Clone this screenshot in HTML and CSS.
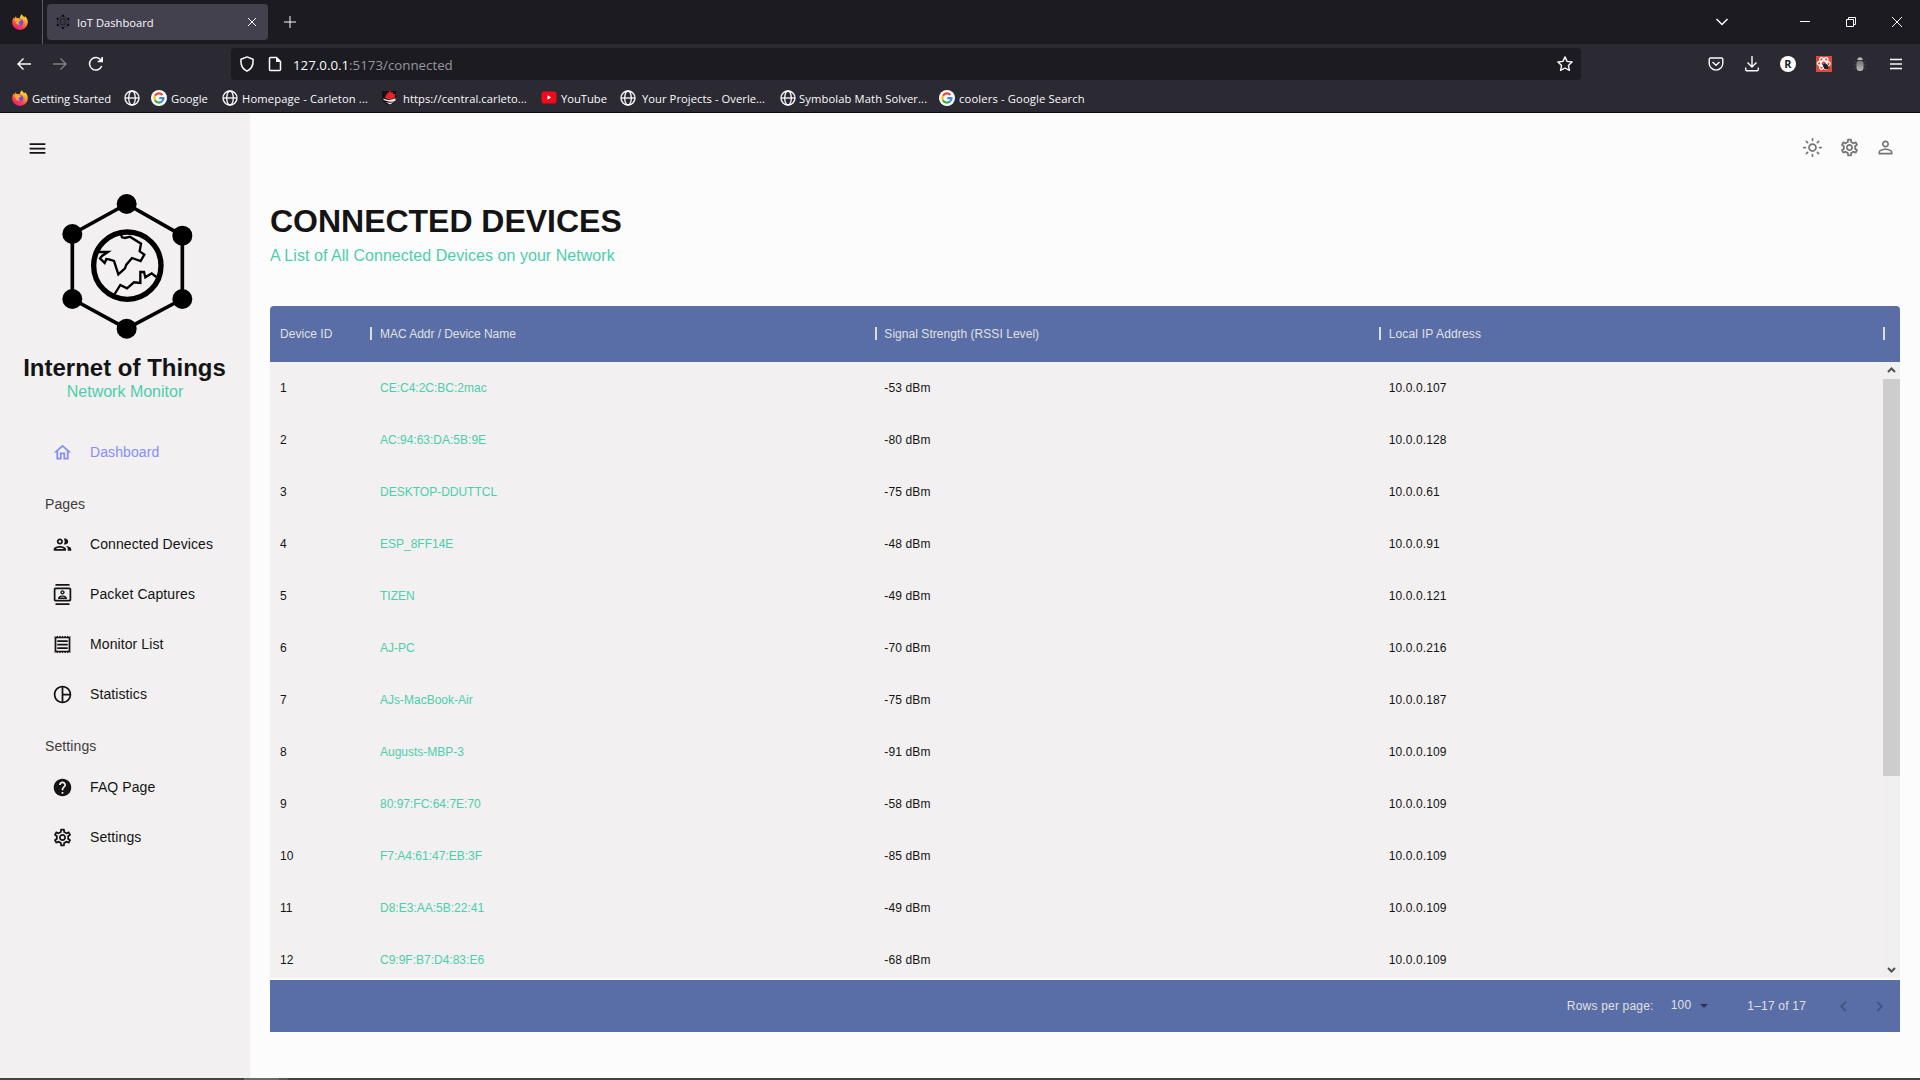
FILE: index.html
```html
<!DOCTYPE html>
<html lang="en">
<head>
<meta charset="utf-8">
<title>IoT Dashboard</title>
<link rel="stylesheet" href="styles.css">
</head>
<body>
<svg class="defs" width="0" height="0" aria-hidden="true">
  <defs>
    <linearGradient id="fire" x1="0.8" y1="0" x2="0.3" y2="1">
      <stop offset="0" stop-color="#fff04a"/><stop offset="0.4" stop-color="#ff9a1f"/><stop offset="0.75" stop-color="#ff3b4e"/><stop offset="1" stop-color="#e3157f"/>
    </linearGradient>
    <linearGradient id="bugfill" x1="0" y1="0" x2="0" y2="1"><stop offset="0" stop-color="#6f6f72"/><stop offset="1" stop-color="#bdbdbd"/></linearGradient>
    <symbol id="firefox" viewBox="0 0 16 16">
      <path fill="url(#fire)" d="M10 .2c.4 1.300 1.500 2 2.600 3.200.3-.2.2-.9.1-1.300C14.800 3.700 16 6 15.800 8.600 15.500 12.800 12 16 8 16 3.600 16 .2 12.500.2 8.300c0-2 .8-3.800 1.700-5 .1.6.2 1 .5 1.300.3-.9.9-1.800 1.600-2.300 0 .8.300 1.300.7 1.800 1-.3 2.200-.1 3 .3C8 2.800 8.700 1.100 10 .2z"/>
      <circle cx="8" cy="8.600" r="3.300" fill="#7a45e8"/>
      <path fill="#ffab2a" d="M2.500 5.500c1.600-1.400 3.800-1.300 5.500.2 1 .1 1.300.6.6 1.200-.8.600-1.800.3-2 1.500-.1 1 1 1.700 2.100 1.500-1.500 1.300-4 .8-4.700-1C3.500 7.700 3 6.500 2.500 5.500z"/>
    </symbol>
    <symbol id="globe" viewBox="0 0 16 16">
      <g fill="none" stroke="#fbfbfe" stroke-width="1.300"><circle cx="8" cy="8" r="7"/><ellipse cx="8" cy="8" rx="3.300" ry="7"/><path d="M1 8h14"/></g>
    </symbol>
    <symbol id="google" viewBox="0 0 16 16">
      <circle cx="8" cy="8" r="8" fill="#fff"/>
      <g fill="none" stroke-width="2.200"><path stroke="#ea4335" d="M4 5.800A4.500 4.500 0 0 1 11.300 4.900"/><path stroke="#fbbc05" d="M4 5.800a4.500 4.500 0 0 0 0 4.400"/><path stroke="#34a853" d="M4 10.200a4.500 4.500 0 0 0 6.900 1.300"/><path stroke="#4285f4" d="M10.900 11.500A4.400 4.400 0 0 0 12.500 8.100H8.200"/></g>
    </symbol>
    <symbol id="iot" viewBox="0 0 495 495">
      <path d="M245 57 412 152 412 342 245 431 82 342 82 147z" fill="none" stroke="#000" stroke-width="11"/>
      <g fill="#000"><circle cx="245" cy="57" r="30"/><circle cx="412" cy="152" r="30"/><circle cx="412" cy="342" r="30"/><circle cx="245" cy="431" r="30"/><circle cx="82" cy="342" r="30"/><circle cx="82" cy="147" r="30"/></g>
      <circle cx="247" cy="242" r="101" fill="none" stroke="#000" stroke-width="16"/>
      <path d="M228 148 231 157 240 159 255 155 288 176 284 199 298 209 287 228 261 219 244 239 240 250 220 268 207 228 192 223 184 222 179 234 165 220 171 213 189 201 160 201M209 327 226 300 246 310 267 292 286 294 286 261 297 261 301 277 320 265 334 276" fill="none" stroke="#000" stroke-width="7"/>
    </symbol>
    <symbol id="gear" viewBox="0 0 24 24"><path d="M19.430 12.980c.04-.32.070-.64.070-.98s-.030-.66-.070-.98l2.110-1.650c.19-.15.240-.42.120-.64l-2-3.460c-.09-.16-.26-.25-.44-.25-.06 0-.12.010-.17.030l-2.490 1c-.52-.4-1.080-.73-1.690-.98l-.38-2.650C14.460 2.180 14.250 2 14 2h-4c-.25 0-.46.180-.49.420l-.38 2.650c-.61.250-1.170.590-1.690.98l-2.490-1c-.06-.020-.12-.030-.18-.030-.17 0-.34.090-.43.250l-2 3.460c-.13.220-.07.490.12.640l2.110 1.650c-.04.320-.07.650-.07.980s.030.660.070.980l-2.110 1.650c-.19.150-.24.420-.12.640l2 3.460c.09.160.26.250.44.250.06 0 .12-.010.17-.030l2.490-1c.52.400 1.080.730 1.690.980l.38 2.650c.03.240.24.420.49.420h4c.25 0 .46-.18.490-.42l.38-2.650c.61-.25 1.170-.59 1.690-.98l2.490 1c.06.020.12.030.18.030.17 0 .34-.09.430-.25l2-3.460c.12-.22.070-.49-.12-.64l-2.110-1.650zm-1.980-1.710c.04.310.050.520.050.730 0 .21-.020.430-.05.730l-.14 1.130.89.700 1.080.840-.7 1.210-1.270-.51-1.040-.42-.9.680c-.43.320-.84.560-1.250.730l-1.060.430-.16 1.130-.2 1.350h-1.400l-.19-1.350-.16-1.130-1.060-.43c-.43-.18-.83-.41-1.230-.71l-.91-.7-1.060.430-1.270.510-.7-1.210 1.080-.84.890-.7-.14-1.130c-.03-.31-.05-.54-.05-.74s.020-.43.050-.73l.14-1.130-.89-.7-1.080-.84.700-1.210 1.270.510 1.040.420.900-.68c.43-.32.840-.56 1.250-.73l1.060-.43.160-1.130.2-1.350h1.390l.19 1.350.16 1.130 1.060.43c.43.180.83.410 1.230.71l.91.700 1.060-.43 1.270-.51.700 1.210-1.070.850-.89.700.14 1.130zM12 8c-2.210 0-4 1.790-4 4s1.790 4 4 4 4-1.790 4-4-1.790-4-4-4zm0 6c-1.100 0-2-.9-2-2s.9-2 2-2 2 .9 2 2-.9 2-2 2z"/></symbol>
  </defs>
</svg>

<header class="browser">
  <div class="tabbar">
    <div class="pinned"><svg width="16" height="16"><use href="#firefox"/></svg></div>
    <div class="tab">
      <svg class="favicon" width="16" height="16"><use href="#iot"/></svg>
      <span class="tab-title">IoT Dashboard</span>
      <svg class="line" width="10" height="10" viewBox="0 0 10 10"><path d="M1 1l8 8M9 1L1 9"/></svg>
    </div>
    <svg class="line newtab" width="12" height="12" viewBox="0 0 12 12"><path d="M6 0v12M0 6h12"/></svg>
    <div class="window-controls">
      <svg class="line" width="14" height="8" viewBox="0 0 14 8"><path stroke-width="1.500" d="M1.500 1l5.500 5.500L12.500 1"/></svg>
      <svg class="line" width="10" height="10" viewBox="0 0 10 10"><path d="M0 4.500h10"/></svg>
      <svg class="line" width="10" height="10" viewBox="0 0 10 10"><path d="M.5 2.500h7v7h-7zM2.500 2.500v-2h7v7h-2"/></svg>
      <svg class="line" width="10" height="10" viewBox="0 0 10 10"><path d="M0 0l10 10M10 0L0 10"/></svg>
    </div>
  </div>
  <div class="navbar">
    <div class="nav-buttons">
      <svg class="line" width="16" height="16" viewBox="0 0 16 16"><path stroke-width="1.400" d="M15 8H2M7.500 2.500L2 8l5.500 5.500"/></svg>
      <svg class="line dim" width="16" height="16" viewBox="0 0 16 16"><path stroke-width="1.400" d="M1 8h13M8.500 2.500L14 8l-5.500 5.500"/></svg>
      <svg class="line" width="16" height="16" viewBox="0 0 16 16"><path stroke-width="1.500" d="M13.700 10A6.300 6.300 0 1 1 13 4.200M14.200 1v4.500H9.700"/><path fill="#fbfbfe" stroke="none" d="M14.900 1v5H9.800z"/></svg>
    </div>
    <div class="urlbar">
      <svg class="line" width="16" height="16" viewBox="0 0 16 16"><path stroke-width="1.500" d="M8 .9l6 2.300c.6 5.600-1.500 9.700-6 12-4.500-2.300-6.600-6.400-6-12z" stroke-linejoin="round"/></svg>
      <svg class="line page" width="14" height="16" viewBox="0 0 14 16"><path stroke-width="1.500" d="M8.500 1.500h-6a1 1 0 0 0-1 1v11a1 1 0 0 0 1 1h9a1 1 0 0 0 1-1v-8z"/><path fill="#fbfbfe" stroke="none" d="M8 1l5 5H8z"/></svg>
      <span class="url"><b>127.0.0.1</b>:5173/connected</span>
      <svg class="line star" width="16" height="16" viewBox="0 0 16 16"><path stroke-width="1.400" stroke-linejoin="round" d="M8 .9l2.100 4.500 5 .6-3.700 3.400 1 5L8 12l-4.400 2.400 1-5L.9 6l5-.6z"/></svg>
    </div>
    <div class="tools">
      <svg class="line" width="16" height="16" viewBox="0 0 16 16"><path stroke-width="1.400" d="M2.500 2h11a1.300 1.300 0 0 1 1.300 1.300v4A6.800 6.800 0 0 1 1.200 7.300v-4A1.300 1.300 0 0 1 2.500 2zM4.500 6L8 9.300 11.500 6"/></svg>
      <svg class="line" width="16" height="16" viewBox="0 0 16 16"><path stroke-width="1.400" d="M8 0v10.500M3.500 6.500L8 11l4.500-4.500M1.700 11.500v2a1.300 1.300 0 0 0 1.300 1.300h10a1.300 1.300 0 0 0 1.300-1.300v-2"/></svg>
      <span class="badge-r">R</span>
      <svg width="16" height="16" viewBox="0 0 16 16"><path fill="#dc4a3d" d="M0 0h16v16H0z"/><g fill="none" stroke="#fff" stroke-width="1.200"><ellipse cx="7.800" cy="7.500" rx="6.500" ry="2.700"/><ellipse cx="7.800" cy="7.500" rx="6.500" ry="2.700" transform="rotate(60 7.800 7.500)"/><ellipse cx="7.800" cy="7.500" rx="6.500" ry="2.700" transform="rotate(120 7.800 7.500)"/></g><ellipse cx="9.800" cy="10.500" rx="2.300" ry="3.200" fill="#222" transform="rotate(-40 9.800 10.500)"/><path stroke="#222" stroke-width=".7" d="M6.500 8.500l7 4M8 13l5-5"/></svg>
      <svg width="16" height="16" viewBox="0 0 16 16"><path stroke="#45444c" d="M2 5l3 2M14 5l-3 2M1 9h14M2 13l3-2M14 13l-3-2"/><rect x="4.500" y="4.500" width="7" height="10.500" rx="3.500" fill="url(#bugfill)"/><path fill="#b5b5b5" d="M5.300 4a2.700 2.700 0 0 1 5.400 0z"/></svg>
      <svg class="line" width="12" height="12" viewBox="0 0 12 12"><path stroke-width="1.300" d="M0 1.500h12M0 6h12M0 10.500h12"/></svg>
    </div>
  </div>
  <nav class="bookmarks">
    <div class="bm"><svg width="16" height="16"><use href="#firefox"/></svg><span>Getting Started</span></div>
    <div class="bm"><svg width="16" height="16"><use href="#globe"/></svg></div>
    <div class="bm"><svg width="16" height="16"><use href="#google"/></svg><span>Google</span></div>
    <div class="bm long"><svg width="16" height="16"><use href="#globe"/></svg><span>Homepage - Carleton ...</span></div>
    <div class="bm central"><svg width="16" height="16" viewBox="0 0 16 16"><path fill="#111" d="M0 1h14v8q-1 5-6.500 6Q1 13 0 9z"/><path fill="#e8212e" d="M8 0l1 2.500L11 2l-.2 2L13.500 4l-1 2.200 1 1.300L9.500 9.200H6L2.500 7.500 4 6 3.500 4.300l2 .4L5.200 2.500l1.600.3z"/><path fill="#eee" d="M1.500 8.500q5 3 12-.3v2.500q-2 1.500-5.500 1t-6.500-1.700zM3.500 12q4.500 1.500 8.500 0L8 14.500z"/></svg><span>https://central.carleto...</span></div>
    <div class="bm"><svg width="16" height="16" viewBox="0 0 16 16"><rect x=".5" y="1.500" width="15" height="12" rx="2.500" fill="#f00a1c"/><path fill="#fff" d="M6.500 5.200v4.600l3.700-2.300z"/></svg><span>YouTube</span></div>
    <div class="bm wide"><svg width="16" height="16"><use href="#globe"/></svg><span>Your Projects - Overle...</span></div>
    <div class="bm tight"><svg width="16" height="16"><use href="#globe"/></svg><span>Symbolab Math Solver...</span></div>
    <div class="bm long"><svg width="16" height="16"><use href="#google"/></svg><span>coolers - Google Search</span></div>
  </nav>
</header>

<div class="app">
  <aside class="sidebar">
    <svg class="burger" width="21" height="21" viewBox="0 0 24 24"><path d="M3 18h18v-2H3v2zm0-5h18v-2H3v2zm0-7v2h18V6H3z"/></svg>
    <svg class="logo" width="165" height="165"><use href="#iot"/></svg>
    <h2 class="brand">Internet of Things</h2>
    <p class="brand-sub">Network Monitor</p>
    <ul class="menu">
      <li class="active"><svg viewBox="0 0 24 24"><path d="M12 5.690l5 4.500V18h-2v-6H9v6H7v-7.810l5-4.500M12 3L2 12h3v8h6v-6h2v6h6v-8h3L12 3z"/></svg>Dashboard</li>
      <li class="heading">Pages</li>
      <li><svg viewBox="0 0 24 24"><path d="M9 13.750c-2.340 0-7 1.170-7 3.500V19h14v-1.750c0-2.330-4.660-3.500-7-3.500zM4.340 17c.84-.58 2.870-1.250 4.660-1.250s3.820.670 4.660 1.250H4.340zM9 12c1.930 0 3.500-1.570 3.500-3.500S10.930 5 9 5 5.500 6.570 5.500 8.500 7.070 12 9 12zm0-5c.83 0 1.500.67 1.500 1.500S9.830 10 9 10s-1.500-.67-1.500-1.500S8.170 7 9 7zm7.040 6.810c1.160.84 1.960 1.960 1.960 3.440V19h4v-1.750c0-2.020-3.500-3.170-5.960-3.440zM15 12c1.930 0 3.500-1.570 3.500-3.500S16.930 5 15 5c-.54 0-1.040.13-1.500.35.63.89 1 1.980 1 3.150s-.37 2.260-1 3.150c.46.22.96.35 1.500.35z"/></svg>Connected Devices</li>
      <li><svg viewBox="0 0 24 24"><path d="M20 4H4c-1.100 0-2 .9-2 2v12c0 1.100.9 2 2 2h16c1.100 0 2-.9 2-2V6c0-1.100-.9-2-2-2zm0 14H4V6h16v12zM4 0h16v2H4zm0 22h16v2H4zm8-10c1.380 0 2.500-1.120 2.500-2.500S13.380 7 12 7 9.500 8.120 9.500 9.500 10.620 12 12 12zm0-3.500c.55 0 1 .45 1 1s-.45 1-1 1-1-.45-1-1 .45-1 1-1zm5 7.490C17 13.900 13.690 13 12 13s-5 .9-5 2.990V17h10v-1.010zm-8.190-.49c.61-.52 2.030-1 3.190-1 1.170 0 2.590.48 3.200 1H8.810z"/></svg>Packet Captures</li>
      <li><svg viewBox="0 0 24 24"><path d="M19.500 3.500L18 2l-1.500 1.500L15 2l-1.500 1.500L12 2l-1.500 1.500L9 2 7.500 3.500 6 2 4.500 3.500 3 2v20l1.500-1.500L6 22l1.500-1.500L9 22l1.500-1.500L12 22l1.500-1.500L15 22l1.500-1.500L18 22l1.500-1.500L21 22V2l-1.500 1.500zM19 19.090H5V4.910h14v14.180zM6 15h12v2H6zm0-4h12v2H6zm0-4h12v2H6z"/></svg>Monitor List</li>
      <li><svg viewBox="0 0 24 24"><path d="M12 2C6.480 2 2 6.480 2 12s4.480 10 10 10 10-4.480 10-10S17.520 2 12 2zm1 2.070c3.610.45 6.480 3.330 6.930 6.930H13V4.070zM4 12c0-4.060 3.070-7.440 7-7.930v15.870c-3.930-.5-7-3.880-7-7.940zm9 7.930V13h6.930c-.45 3.610-3.320 6.480-6.930 6.930z"/></svg>Statistics</li>
      <li class="heading second">Settings</li>
      <li><svg viewBox="0 0 24 24"><path d="M12 2C6.480 2 2 6.480 2 12s4.480 10 10 10 10-4.480 10-10S17.520 2 12 2zm1 17h-2v-2h2v2zm2.070-7.750l-.9.920C13.450 12.900 13 13.500 13 15h-2v-.5c0-1.100.45-2.100 1.170-2.830l1.240-1.260c.37-.36.590-.86.590-1.410 0-1.100-.9-2-2-2s-2 .9-2 2H8c0-2.210 1.790-4 4-4s4 1.790 4 4c0 .88-.36 1.680-.93 2.250z"/></svg>FAQ Page</li>
      <li><svg><use href="#gear"/></svg>Settings</li>
    </ul>
  </aside>

  <main class="main">
    <div class="topbar">
      <svg width="21" height="21" viewBox="0 0 24 24"><path d="M12 9c1.650 0 3 1.350 3 3s-1.350 3-3 3-3-1.350-3-3 1.350-3 3-3m0-2c-2.760 0-5 2.240-5 5s2.240 5 5 5 5-2.240 5-5-2.240-5-5-5zM2 13h2c.55 0 1-.45 1-1s-.45-1-1-1H2c-.55 0-1 .45-1 1s.45 1 1 1zm18 0h2c.55 0 1-.45 1-1s-.45-1-1-1h-2c-.55 0-1 .45-1 1s.45 1 1 1zM11 2v2c0 .55.45 1 1 1s1-.45 1-1V2c0-.55-.45-1-1-1s-1 .45-1 1zm0 18v2c0 .55.450 1 1 1s1-.45 1-1v-2c0-.55-.45-1-1-1s-1 .45-1 1z"/><path d="M5 5l1.400 1.400M19 5l-1.400 1.400M5 19l1.400-1.400M19 19l-1.400-1.400" stroke="currentColor" stroke-width="2" stroke-linecap="round"/></svg>
      <svg width="21" height="21"><use href="#gear"/></svg>
      <svg width="21" height="21" viewBox="0 0 24 24"><path d="M12 5.900c1.160 0 2.100.94 2.100 2.100s-.94 2.100-2.100 2.100S9.900 9.160 9.900 8s.94-2.100 2.100-2.100m0 9c2.970 0 6.100 1.460 6.100 2.100v1.100H5.900V17c0-.64 3.130-2.100 6.100-2.100M12 4C9.790 4 8 5.790 8 8s1.790 4 4 4 4-1.790 4-4-1.790-4-4-4zm0 9c-2.670 0-8 1.340-8 4v3h16v-3c0-2.660-5.330-4-8-4z"/></svg>
    </div>
    <h1 class="title">CONNECTED DEVICES</h1>
    <p class="subtitle">A List of All Connected Devices on your Network</p>

    <section class="grid">
      <div class="row head"><span>Device ID</span><span class="mac">MAC Addr / Device Name</span><span>Signal Strength (RSSI Level)</span><span class="ip">Local IP Address</span></div>
      <div class="body">
        <div class="rows">
          <div class="row"><span>1</span><span class="name">CE:C4:2C:BC:2mac</span><span>-53 dBm</span><span>10.0.0.107</span></div>
          <div class="row"><span>2</span><span class="name">AC:94:63:DA:5B:9E</span><span>-80 dBm</span><span>10.0.0.128</span></div>
          <div class="row"><span>3</span><span class="name">DESKTOP-DDUTTCL</span><span>-75 dBm</span><span>10.0.0.61</span></div>
          <div class="row"><span>4</span><span class="name">ESP_8FF14E</span><span>-48 dBm</span><span>10.0.0.91</span></div>
          <div class="row"><span>5</span><span class="name">TIZEN</span><span>-49 dBm</span><span>10.0.0.121</span></div>
          <div class="row"><span>6</span><span class="name">AJ-PC</span><span>-70 dBm</span><span>10.0.0.216</span></div>
          <div class="row"><span>7</span><span class="name">AJs-MacBook-Air</span><span>-75 dBm</span><span>10.0.0.187</span></div>
          <div class="row"><span>8</span><span class="name">Augusts-MBP-3</span><span>-91 dBm</span><span>10.0.0.109</span></div>
          <div class="row"><span>9</span><span class="name">80:97:FC:64:7E:70</span><span>-58 dBm</span><span>10.0.0.109</span></div>
          <div class="row"><span>10</span><span class="name">F7:A4:61:47:EB:3F</span><span>-85 dBm</span><span>10.0.0.109</span></div>
          <div class="row"><span>11</span><span class="name">D8:E3:AA:5B:22:41</span><span>-49 dBm</span><span>10.0.0.109</span></div>
          <div class="row"><span>12</span><span class="name">C9:9F:B7:D4:83:E6</span><span>-68 dBm</span><span>10.0.0.109</span></div>
        </div>
        <div class="scrollbar">
          <svg width="17" height="17" viewBox="0 0 17 17"><path d="M5 10l3.500-3.500L12 10"/></svg>
          <div class="thumb"></div>
          <svg width="17" height="17" viewBox="0 0 17 17"><path d="M5 7l3.500 3.500L12 7"/></svg>
        </div>
      </div>
      <div class="foot">
        <span class="label">Rows per page:</span>
        <span class="size">100</span>
        <svg class="caret" width="8" height="4" viewBox="0 0 8 4"><path d="M0 0h8L4 4z"/></svg>
        <span class="range">1–17 of 17</span>
        <svg class="chev" width="21" height="21" viewBox="0 0 24 24"><path d="M15.410 16.590L10.830 12l4.580-4.590L14 6l-6 6 6 6 1.410-1.410z"/></svg>
        <svg class="chev" width="21" height="21" viewBox="0 0 24 24"><path d="M8.590 16.590L13.170 12 8.590 7.410 10 6l6 6-6 6-1.410-1.410z"/></svg>
      </div>
    </section>
  </main>
</div>
<div class="taskbar"><i></i></div>
</body>
</html>
```
FILE: styles.css
```css
* { box-sizing: border-box; }
body {
  margin: 0;
  width: 1920px;
  height: 1080px;
  overflow: hidden;
  display: flex;
  flex-direction: column;
  font-family: "Liberation Sans", Arial, sans-serif;
  background: #fcfcfc;
}
.defs { position: absolute; }
svg { display: block; flex: none; }
h1, h2, p, ul { margin: 0; padding: 0; }

/* Browser chrome */
.browser {
  flex: none;
  height: 113px;
  background: #2b2a33;
  border-bottom: 1px solid #0c0c0d;
  color: #fbfbfe;
  font-family: "Open Sans", "Noto Sans", sans-serif;
  font-size: 11.2px;
}
.line { fill: none; stroke: #fbfbfe; }
.tabbar { height: 44px; background: #1c1b22; display: flex; align-items: center; }
.pinned { width: 43px; height: 44px; padding: 14px 0 0 12px; border-right: 1px solid #5b5b66; }
.tab {
  width: 221px; height: 36px; margin-left: 4px; padding: 0 11px 0 8px;
  display: flex; align-items: center;
  background: #42414d; border-radius: 4px;
}
.tab-title { margin-left: 6px; flex: 1; line-height: 16px; padding-top: 1px; }
.newtab { margin-left: 15.5px; }
.window-controls { margin-left: auto; padding-right: 18px; display: flex; align-items: center; }
.window-controls svg + svg { margin-left: 36px; }
.window-controls svg:nth-child(2) { margin-left: 71px; }
.navbar { height: 40px; display: flex; align-items: center; padding-left: 16px; }
.nav-buttons { display: flex; gap: 20px; width: 215px; }
.dim { opacity: .4; }
.urlbar {
  width: 1350px; height: 32px; padding: 0 8px;
  display: flex; align-items: center;
  background: #1c1b22; border-radius: 4px;
}
.page { margin-left: 13px; }
.url { margin-left: 11px; flex: 1; font-size: 13.3px; line-height: 20px; color: #96969c; padding-top: 2px; }
.url b { font-weight: 400; color: #fbfbfe; }
.tools { margin-left: auto; padding-right: 18px; display: flex; align-items: center; gap: 20px; }
.tools svg:last-child { margin-left: 2px; }
.badge-r {
  width: 16px; height: 16px; border-radius: 50%; background: #fff; color: #222;
  font-size: 11px; font-weight: 700; line-height: 16px; text-align: center;
}
.bookmarks {
  height: 28px; padding-left: 12px;
  display: grid; align-items: center;
  grid-template-columns: 112px 27px 71px 160px 159px 79px 160px 159px 160px;
}
.bm { display: flex; align-items: center; gap: 4px; white-space: nowrap; line-height: 16px; }
.bm.central { gap: 5px; letter-spacing: .07px; }
.bm.wide { gap: 6px; letter-spacing: .06px; }
.bm.tight { gap: 3px; letter-spacing: .12px; }
.bm.long { letter-spacing: .15px; }
.bm span { padding-top: 1px; }

/* Application */
.app { flex: 1; display: flex; min-height: 0; }
.sidebar { width: 250px; flex: none; background: #f2f0f0; color: #141414; }
.burger { margin: 25px 0 0 27px; fill: #141414; }
.logo { margin: 26px 0 0 45px; }
.brand { margin-top: 4px; padding-right: 1px; font-size: 24px; line-height: 28px; text-align: center; }
.brand-sub { font-size: 16px; line-height: 20px; text-align: center; color: #4cceac; }
.menu { list-style: none; margin-top: 25px; font-size: 14px; letter-spacing: .1px; }
.menu li { height: 50px; padding-left: 52px; display: flex; align-items: center; }
.menu li svg { width: 21px; height: 21px; margin-right: 17px; fill: currentColor; }
.menu .active { color: #868dfb; }
.menu .heading {
  height: 42px; padding: 19px 0 0 45px;
  align-items: flex-start; line-height: 16px; color: #3d3d3d;
}
.menu .second { height: 43px; }

.main { flex: 1; padding: 0 20px; display: flex; flex-direction: column; }
.topbar {
  height: 68px; padding-right: 4px;
  display: flex; justify-content: flex-end; align-items: center; gap: 15.5px;
  color: #757575;
}
.topbar svg { fill: currentColor; }
.title { margin-top: 21px; font-size: 32px; line-height: 38px; color: #141414; letter-spacing: -.02px; }
.subtitle { margin-top: 6px; font-size: 16px; line-height: 20px; color: #4cceac; letter-spacing: .05px; }

.grid { margin-top: 40px; height: 726px; font-size: 12px; color: #141414; }
.row { display: grid; grid-template-columns: 100px repeat(3, 504.33px); height: 52px; align-items: center; }
.row span { padding-left: 10px; white-space: nowrap; }
.rows .row span:nth-child(n+3) { letter-spacing: .12px; }
.head { height: 56px; background: #596ea7; color: #e0e0e0; border-radius: 4px 4px 0 0; letter-spacing: .05px; }
.head .mac { letter-spacing: -.04px; }
.head .ip { letter-spacing: .17px; }
.head span { position: relative; }
.head span::after {
  content: ""; position: absolute; right: -2.500px; top: 0;
  width: 2px; height: 13px; background: #dcdcdc;
}
.head span:first-child::after { right: -2px; }
.body { height: 618px; display: flex; background: #f2f0f0; border-bottom: 2px solid #fafafa; }
.rows { width: 1613px; overflow: hidden; }
.name { color: #4cceac; }
.scrollbar { width: 17px; background: #f0f0f0; display: flex; flex-direction: column; }
.scrollbar path { fill: none; stroke: #505050; stroke-width: 2; }
.thumb { height: 397px; background: #cdcdcd; margin-bottom: auto; }
.foot {
  height: 52px; background: #596ea7; color: #e0e0e0; padding-right: 10px;
  display: flex; align-items: center; justify-content: flex-end; letter-spacing: .2px;
}
.size { margin-left: 17px; padding-bottom: 2px; }
.caret { margin-left: 9px; fill: #2d3450; }
.range { margin-left: 39px; margin-right: 27px; }
.chev { fill: #43527d; }
.chev + .chev { margin-left: 15px; }

.taskbar { flex: none; height: 2px; background: #444; padding-left: 244px; }
.taskbar i { display: block; width: 44px; height: 2px; background: #6a6a6a; border-right: 9px solid #555; }
```
